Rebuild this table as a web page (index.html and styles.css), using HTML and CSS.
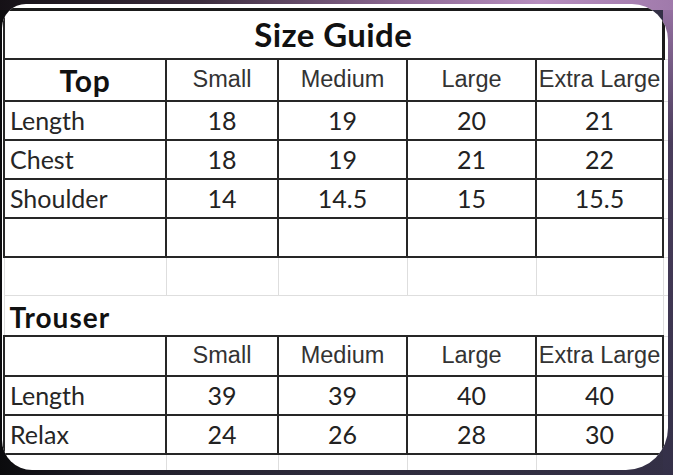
FILE: index.html
```html
<!DOCTYPE html>
<html>
<head>
<meta charset="utf-8">
<link rel="stylesheet" href="styles.css">
</head>
<body>
<div class="card">
  <table class="sheet">
    <colgroup>
      <col class="c1"><col class="c2"><col class="c3"><col class="c4"><col class="c5"><col class="c6">
    </colgroup>
    <tr class="r-title"><td colspan="5" class="title">Size Guide</td><td class="edge"></td></tr>
    <tr class="r-head box"><td class="section">Top</td><td class="hd">Small</td><td class="hd">Medium</td><td class="hd">Large</td><td class="hd">Extra Large</td><td class="edge"></td></tr>
    <tr class="r-data box"><td class="lbl">Length</td><td class="num">18</td><td class="num">19</td><td class="num">20</td><td class="num">21</td><td class="edge"></td></tr>
    <tr class="r-data box"><td class="lbl">Chest</td><td class="num">18</td><td class="num">19</td><td class="num">21</td><td class="num">22</td><td class="edge"></td></tr>
    <tr class="r-data box"><td class="lbl">Shoulder</td><td class="num">14</td><td class="num">14.5</td><td class="num">15</td><td class="num">15.5</td><td class="edge"></td></tr>
    <tr class="r-data box"><td></td><td></td><td></td><td></td><td></td><td class="edge"></td></tr>
    <tr class="r-data gap"><td></td><td></td><td></td><td></td><td></td><td class="edge"></td></tr>
    <tr class="r-trouser gap"><td colspan="5" class="section-left">Trouser</td><td class="edge"></td></tr>
    <tr class="r-head2 box"><td></td><td class="hd">Small</td><td class="hd">Medium</td><td class="hd">Large</td><td class="hd">Extra Large</td><td class="edge"></td></tr>
    <tr class="r-data box"><td class="lbl">Length</td><td class="num">39</td><td class="num">39</td><td class="num">40</td><td class="num">40</td><td class="edge"></td></tr>
    <tr class="r-data box"><td class="lbl">Relax</td><td class="num">24</td><td class="num">26</td><td class="num">28</td><td class="num">30</td><td class="edge"></td></tr>
    <tr class="r-tail gap"><td></td><td></td><td></td><td></td><td></td><td class="edge"></td></tr>
  </table>
</div>
</body>
</html>
```
FILE: styles.css
```css
html, body {
  margin: 0;
  padding: 0;
}
body {
  width: 673px;
  height: 475px;
  overflow: hidden;
  background:
    linear-gradient(to right, #151116 0%, #3d2e3f 30%, #8e6a95 60%, #b78fbf 80%, #a07aab 100%) top / 100% 10px no-repeat,
    linear-gradient(to bottom, #9a74a6 0%, #4a3d5c 30%, #343048 100%) right / 10px 100% no-repeat,
    linear-gradient(to right, #0b0b0d 0%, #1f1d28 15%, #2e2b3c 50%, #343046 100%);
}
.card {
  margin: 4px 0 0 2px;
  width: 666px;
  height: 466px;
  background: #fff;
  border-radius: 24px 36px 42px 30px;
  overflow: hidden;
  padding: 4px 0 0 1px;
  box-sizing: border-box;
}
.sheet {
  border-collapse: collapse;
  table-layout: fixed;
  width: 667px;
  font-family: Lato, "Open Sans", sans-serif;
  color: #1c1c1c;
}
.c1 { width: 162px; }
.c2 { width: 112px; }
.c3 { width: 129px; }
.c4 { width: 129px; }
.c5 { width: 127px; }
.c6 { width: 8px; }
.sheet td {
  padding: 0 6px;
  white-space: nowrap;
  overflow: visible;
  line-height: 1.15;
}
.box td {
  border: 2px solid #262626;
}
.gap td {
  border: 1px solid #dedede;
}
.sheet td.edge {
  border: none;
  border-bottom: 1px solid #dedede;
  border-right: 1px solid #dedede;
  padding: 0;
}
.title {
  height: 47px;
  border-top: 3px solid #1a1a1a;
  border-left: 2px solid #262626;
  border-right: 3px solid #1a1a1a;
  border-bottom: 2px solid #262626;
  text-align: center;
  font-weight: 700;
  font-size: 33px;
  letter-spacing: 0.4px;
  color: #111;
  padding-top: 0;
}
.r-head td { height: 40px; }
.r-head2 td { height: 38px; }
.r-data td { height: 37px; }
.r-trouser td { height: 35px; }
.r-tail td { height: 20px; }
.section {
  text-align: center;
  font-weight: 700;
  font-size: 30px;
  letter-spacing: 0.8px;
  color: #111;
}
.sheet td.section-left {
  text-align: left;
  font-weight: 700;
  font-size: 28px;
  letter-spacing: 1px;
  color: #111;
  padding: 4px 0 0 5px;
}
.sheet td.hd {
  text-align: center;
  font-family: "Liberation Sans", Arial, sans-serif;
  font-size: 23.5px;
  color: #333;
  padding: 0;
}
.sheet td.lbl {
  text-align: left;
  font-size: 25px;
  color: #262626;
  padding-left: 5px;
}
.num {
  text-align: center;
  font-size: 25px;
  color: #222;
}
```
